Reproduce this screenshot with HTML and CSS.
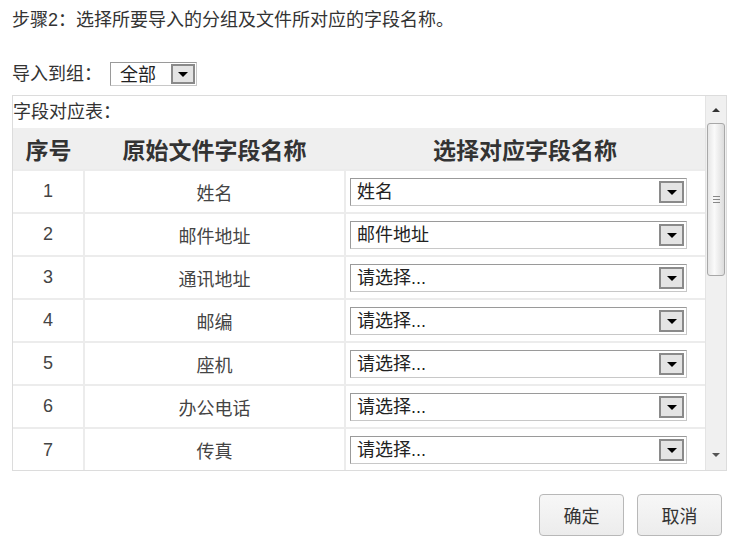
FILE: index.html
```html
<!DOCTYPE html>
<html>
<head>
	<meta charset="utf-8">
	<title>导入联系人</title>
	<link rel="stylesheet" href="styles.css">
</head>
<body>
<div class="page">
	<p class="step">步骤2：选择所要导入的分组及文件所对应的字段名称。</p>
	<div class="group-row">
		<span class="label">导入到组：</span>
		<div class="sel sel-small"><span class="sel-text">全部</span><span class="sel-btn"><i></i></span></div>
	</div>
	<div class="map-box">
		<div class="map-content">
			<div class="caption">字段对应表：</div>
			<table class="map">
				<thead>
					<tr><th class="c-no">序号</th><th class="c-src">原始文件字段名称</th><th class="c-dst">选择对应字段名称</th></tr>
				</thead>
				<tbody>
					<tr><td>1</td><td>姓名</td><td><div class="sel"><span class="sel-text">姓名</span><span class="sel-btn"><i></i></span></div></td></tr>
					<tr><td>2</td><td>邮件地址</td><td><div class="sel"><span class="sel-text">邮件地址</span><span class="sel-btn"><i></i></span></div></td></tr>
					<tr><td>3</td><td>通讯地址</td><td><div class="sel"><span class="sel-text">请选择...</span><span class="sel-btn"><i></i></span></div></td></tr>
					<tr><td>4</td><td>邮编</td><td><div class="sel"><span class="sel-text">请选择...</span><span class="sel-btn"><i></i></span></div></td></tr>
					<tr><td>5</td><td>座机</td><td><div class="sel"><span class="sel-text">请选择...</span><span class="sel-btn"><i></i></span></div></td></tr>
					<tr><td>6</td><td>办公电话</td><td><div class="sel"><span class="sel-text">请选择...</span><span class="sel-btn"><i></i></span></div></td></tr>
					<tr><td>7</td><td>传真</td><td><div class="sel"><span class="sel-text">请选择...</span><span class="sel-btn"><i></i></span></div></td></tr>
				</tbody>
			</table>
		</div>
		<div class="vscroll">
			<span class="sb-up"></span>
			<span class="sb-thumb"><b></b></span>
			<span class="sb-down"></span>
		</div>
	</div>
	<div class="actions">
		<button class="btn">确定</button>
		<button class="btn">取消</button>
	</div>
</div>
</body>
</html>
```

FILE: styles.css
```css
*{margin: 0;padding: 0;box-sizing: border-box;}
body{background: #fff;font-family: "Liberation Sans", "Noto Sans CJK SC", sans-serif;font-size: 18px;color: #333;}
.page{padding: 10px 15px 0 12px;width: 742px;}
.step{line-height: 20px;height: 20px;}

.group-row{display: flex;align-items: center;margin-top: 32px;height: 24px;}
.label{width: 98px;line-height: 24px;}

/* fake select boxes */
.sel{display: flex;align-items: stretch;height: 28px;border: 1px solid #9a9a9a;border-right-color: #c8c8c8;border-bottom-color: #c8c8c8;background: #fff;padding: 2px;text-align: left;}
.sel-text{flex: 1;line-height: 22px;padding-left: 4px;color: #222;white-space: nowrap;}
.sel-btn{width: 25px;border: 2px solid #8a8a8a;background: #e4e4e4;display: flex;align-items: center;justify-content: center;}
.sel-btn i{width: 0;height: 0;border-left: 5px solid transparent;border-right: 5px solid transparent;border-top: 5px solid #000;margin-top: 1px;}
.sel-small{width: 87px;height: 24px;padding: 1px;}
.sel-small .sel-text{line-height: 22px;padding-left: 8px;}
.sel-small .sel-btn{width: 24px;}

.map-box{display: flex;margin-top: 9px;width: 715px;height: 376px;border: 1px solid #dcdcdc;overflow: hidden;}
.map-content{flex: 1;}
.caption{height: 32px;line-height: 32px;color: #333;}

.map{width: 100%;border-collapse: collapse;table-layout: fixed;}
.map th{height: 42px;background: #efefef;font-size: 23px;font-weight: bold;color: #333;text-align: center;}
.map th.c-no{width: 71px;}
.map th.c-src{width: 261px;}
.map td{height: 43px;border: 2px solid #ececec;text-align: center;color: #444;}
.map tr td:first-child{border-left: none;}
.map tr td:last-child{border-right: none;}
.map tbody tr:last-child td{border-bottom: none;}
.map td .sel{width: 337px;margin-left: 4px;}

/* fake vertical scrollbar */
.vscroll{width: 21px;background: #f0f0f0;border-left: 1px solid #e4e4e4;display: flex;flex-direction: column;align-items: center;}
.sb-up,.sb-down{height: 27px;width: 100%;display: flex;align-items: center;justify-content: center;}
.sb-up:after{content: "";border-left: 4px solid transparent;border-right: 4px solid transparent;border-bottom: 4px solid #333;}
.sb-down{margin-top: auto;height: 30px;}
.sb-down:after{content: "";border-left: 4px solid transparent;border-right: 4px solid transparent;border-top: 4px solid #555;}
.sb-thumb{width: 18px;height: 153px;border: 1px solid #a8a8a8;border-radius: 3px;background: linear-gradient(to right, #e6e6e6, #fafafa 40%, #dcdcdc);display: flex;align-items: center;justify-content: center;}
.sb-thumb b{width: 7px;height: 7px;border-top: 1px solid #888;border-bottom: 1px solid #888;position: relative;}
.sb-thumb b:after{content: "";position: absolute;left: 0;right: 0;top: 2px;border-top: 1px solid #888;}

.actions{display: flex;justify-content: flex-end;gap: 13px;margin-top: 23px;width: 710px;}
.btn{width: 85px;height: 42px;border: 1px solid #b8b8b8;border-radius: 4px;background: linear-gradient(#f7f7f7, #ececec);font-family: "Liberation Sans", "Noto Sans CJK SC", sans-serif;font-size: 18px;color: #333;}
```
